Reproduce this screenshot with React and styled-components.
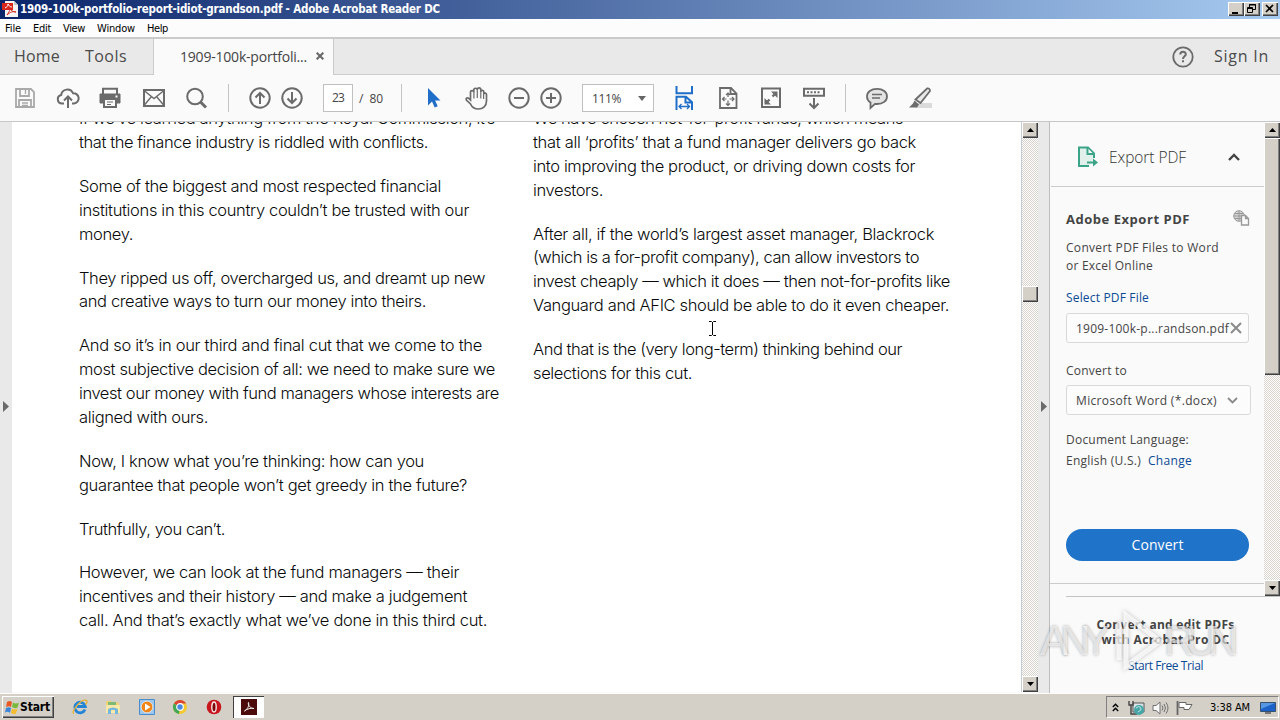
import React, { useLayoutEffect, useRef, useState } from 'react';
import styled, { createGlobalStyle, css } from 'styled-components';

const GlobalStyle = createGlobalStyle`
  * {
    box-sizing: border-box;
  }
  body {
    margin: 0;
    overflow: hidden;
    font-family: 'Open Sans', 'Noto Sans', sans-serif;
  }
  svg {
    display: block;
    flex: none;
  }
`;

const raised = css`
  background: #d4d0c8;
  box-shadow: inset 1px 1px 0 #fff, inset -1px -1px 0 #404040, inset -2px -2px 0 #808080;
`;

const Window = styled.div`
  display: flex;
  flex-direction: column;
  width: 1280px;
  height: 720px;
  background: #fafafa;
`;

const FitSpan = styled.span`
  display: inline-block;
  white-space: pre;
`;

// Spreads the letters so that the run is `width` pixels long
const Fit = ({ width, children }) => {
  const ref = useRef(null);
  const [spacing, setSpacing] = useState(0);

  useLayoutEffect(() => {
    const natural = ref.current.getBoundingClientRect().width;
    setSpacing((width - natural) / children.length);
  }, []);

  return (
    <FitSpan ref={ref} style={{ letterSpacing: `${spacing}px` }}>
      {children}
    </FitSpan>
  );
};

/* ---------- title bar ---------- */

const TitleBar = styled.header`
  display: flex;
  align-items: center;
  flex: none;
  height: 19px;
  padding: 0 2px 1px 2px;
  background: linear-gradient(90deg, #0a246a, #a6caf0);
  color: #fff;
  font: bold 11.5px/17px 'DejaVu Sans Condensed', 'DejaVu Sans', sans-serif;
`;
const TitleText = styled.div`
  flex: 1;
  margin-left: 2px;
`;
const TitleButton = styled.button`
  ${raised}
  width: 16px;
  height: 14px;
  margin-left: ${(props) => props.$gap || 0}px;
  padding: 0;
  border: 0;
`;

const MenuBar = styled.nav`
  display: flex;
  flex: none;
  height: 18px;
  padding-left: 5px;
  background: #fcfcfc;
  font: 11px/19px 'DejaVu Sans Condensed', 'DejaVu Sans', sans-serif;
  color: #000;
`;
const MenuItem = styled.div`
  width: ${(props) => props.$w}px;
`;

/* ---------- tabs ---------- */

const TabBar = styled.div`
  display: flex;
  flex: none;
  height: 38px;
  border-top: 2px solid #cbcbcb;
  background: #e9e9e9;
  color: #4b4b4b;
  font-size: 16px;
  line-height: 35px;
`;
const TabGroup = styled.div`
  display: flex;
  width: ${(props) => (props.$w ? `${props.$w}px` : 'auto')};
  flex: ${(props) => (props.$w ? 'none' : 1)};
  justify-content: ${(props) => (props.$w ? 'flex-start' : 'flex-end')};
  align-items: center;
  border-bottom: 1px solid #cbcbcb;
`;
const TabLabel = styled.div`
  margin-left: ${(props) => props.$ml}px;
`;
const FileTab = styled.div`
  display: flex;
  align-items: center;
  width: 181px;
  padding: 0 0 2px 26px;
  border-left: 1px solid #cbcbcb;
  border-right: 1px solid #cbcbcb;
  background: #fafafa;
  font-size: 14px;
  color: #444;
  svg {
    margin-left: 9px;
  }
`;
const SignIn = styled.div`
  margin: 0 11px 0 19px;
`;

/* ---------- toolbar ---------- */

const Toolbar = styled.div`
  display: flex;
  align-items: center;
  flex: none;
  height: 47px;
  border-bottom: 1px solid #c6c6c6;
  background: #fafafa;
  color: #444;
  font-size: 12px;
`;
const ToolIcon = styled.svg.attrs({ width: 24, height: 24, viewBox: '0 0 24 24' })`
  margin-left: ${(props) => props.$ml}px;
  fill: none;
  stroke: ${(props) => props.$color || '#6b6b6b'};
  stroke-width: 2;
`;
const Separator = styled.div`
  width: 1px;
  height: 28px;
  margin: 0 0 0 ${(props) => props.$ml}px;
  background: #c4c4c4;
`;
const PageBox = styled.div`
  width: 30px;
  height: 28px;
  margin-left: 19px;
  border: 1px solid #c0c0c0;
  background: #fff;
  line-height: 26px;
  text-align: center;
`;
const PageTotal = styled.div`
  width: 24px;
  margin-left: 6px;
`;
const ZoomBox = styled.div`
  display: flex;
  align-items: center;
  justify-content: space-between;
  width: 72px;
  height: 28px;
  margin-left: 19px;
  padding: 0 7px 0 9px;
  border: 1px solid #c0c0c0;
  background: #fff;
`;

/* ---------- document ---------- */

const Workspace = styled.div`
  display: flex;
  flex: none;
  height: 571px;
`;
const Gutter = styled.div`
  display: flex;
  width: ${(props) => props.$w}px;
  padding: ${(props) => props.$pad};
  background: #e9e9e9;
  border-right: ${(props) => (props.$line ? '1px solid #bdbdbd' : 0)};
`;
const Page = styled.main`
  display: flex;
  width: 1009px;
  height: 570px;
  overflow: hidden;
  background: #fff;
  position: relative;
`;
const Column = styled.div`
  width: ${(props) => props.$w}px;
  margin: -14.8px 0 0 ${(props) => props.$ml}px;
  color: #080a0a;
  font: 300 16.5px/23.8px Inter, 'Liberation Sans', sans-serif;
`;
const Paragraph = styled.p`
  margin: 0 0 20.2px;
`;
const Line = styled.span`
  display: block;
  height: 23.8px;
`;
const TextCursor = styled.svg`
  position: absolute;
  left: 696px;
  top: 199px;
`;

const Scrollbar = styled.div`
  display: flex;
  flex-direction: column;
  flex: none;
  width: ${(props) => props.$w}px;
  height: ${(props) => props.$h}px;
  background: repeating-conic-gradient(#fff 0 25%, #d8d4cd 0 50%) 0 0 / 2px 2px;
  border-left: ${(props) => (props.$line ? '1px solid #c5cdd2' : 0)};
`;
const ScrollButton = styled.div`
  ${raised}
  display: flex;
  align-items: center;
  justify-content: center;
  height: 16px;
`;
const Thumb = styled.div`
  ${raised}
  height: ${(props) => props.$h}px;
  margin-top: ${(props) => props.$top}px;
  margin-bottom: auto;
`;

/* ---------- export panel ---------- */

const Panel = styled.aside`
  width: 230px;
  background: #fafafa;
  color: #444;
  font-size: 12px;
  position: relative;
`;
const PanelTop = styled.div`
  display: flex;
  height: 474px;
`;
const PanelBody = styled.div`
  width: 214px;
  height: 462px;
  border-bottom: 1px solid #cbcbcb;
`;
const PanelHeader = styled.div`
  display: flex;
  align-items: center;
  height: 65px;
  margin-left: 1px;
  padding: 6px 24px 0 26px;
  border-bottom: 1px solid #cbcbcb;
  font-size: 15.5px;
  font-weight: 300;
  color: #333;
`;
const HeaderName = styled.div`
  flex: 1;
  margin-left: 10px;
`;
const Section = styled.div`
  padding: 0 14px 0 16px;
`;
const SectionTitle = styled.div`
  display: flex;
  justify-content: space-between;
  height: 18px;
  margin-top: 23px;
  line-height: 18px;
  font-size: 13px;
  font-weight: 700;
`;
const Text = styled.div`
  margin-top: ${(props) => props.$mt || 0}px;
  line-height: 18px;
  white-space: nowrap;
`;
const Link = styled.span`
  color: #0b4a94;
  margin-left: ${(props) => props.$ml || 0}px;
`;
const Field = styled.div`
  display: flex;
  align-items: center;
  justify-content: space-between;
  width: ${(props) => props.$w}px;
  height: 30px;
  margin-top: ${(props) => props.$mt}px;
  padding: 0 ${(props) => props.$pr}px 0 9px;
  border: 1px solid #d9d9d9;
  border-radius: 3px;
  background: #fcfcfc;
`;
const ConvertButton = styled.button`
  display: block;
  width: 183px;
  height: 32px;
  margin-top: 59px;
  padding: 0;
  border: 0;
  border-radius: 16px;
  background: #1f73c9;
  color: #fff;
  font: 14px/30px 'Open Sans', 'Noto Sans', sans-serif;
`;
const Promo = styled.div`
  margin-left: 16px;
  padding: 20px 15px 0 0;
  border-top: 1px solid #c3c3c3;
  text-align: center;
  line-height: 15px;
`;
const PromoLink = styled.div`
  margin-top: 11px;
  color: #0b4a94;
`;
const Watermark = styled.div`
  position: absolute;
  left: -10px;
  top: 488px;
  display: flex;
  align-items: center;
  color: rgba(255, 255, 255, 0.6);
  font: 42px/62px 'Liberation Sans Narrow', 'Liberation Sans', Arial, sans-serif;
  text-shadow: 0 0 3px rgba(0, 0, 0, 0.32);
  svg {
    margin: 0 0 0 9px;
    filter: drop-shadow(0 0 2px rgba(0, 0, 0, 0.3));
  }
`;

/* ---------- taskbar ---------- */

const Taskbar = styled.footer`
  display: flex;
  flex: none;
  height: 27px;
  padding: 2px 1px 0 2px;
  border-top: 1px solid #fff;
  background: #d4d0c8;
  font: 11px/20px 'DejaVu Sans Condensed', 'DejaVu Sans', sans-serif;
  color: #000;
`;
const StartButton = styled.div`
  ${raised}
  display: flex;
  align-items: center;
  width: 52px;
  height: 22px;
  padding-left: 3px;
  font-weight: bold;
  font-size: 12px;
`;
const Launcher = styled.div`
  margin: 3px 0 0 ${(props) => props.$ml}px;
`;
const RunningTask = styled.div`
  display: flex;
  align-items: center;
  justify-content: center;
  width: 31px;
  height: 22px;
  margin: 0 auto 0 11px;
  background: #fff;
  box-shadow: inset 1px 1px 0 #404040;
`;
const Tray = styled.div`
  display: flex;
  align-items: center;
  width: 173px;
  height: 22px;
  padding: 1px 1px 0 5px;
  border: 1px solid;
  border-color: #808080 #fff #fff #808080;
`;
const TrayItem = styled.div`
  margin-left: ${(props) => props.$ml}px;
`;

const Triangle = ({ d, w, h, fill = '#000' }) => (
  <svg width={w} height={h}>
    <path d={d} fill={fill} />
  </svg>
);

const UpArrow = () => <Triangle w={7} h={4} d="M0 4L3.5 0L7 4Z" />;
const DownArrow = () => <Triangle w={7} h={4} d="M0 0L3.5 4L7 0Z" />;
const SideArrow = () => <Triangle w={6} h={11} d="M0 0L6 5.5L0 11Z" fill="#6a6a6a" />;

const PdfIcon = () => (
  <svg width="16" height="16" viewBox="0 0 16 16">
    <path d="M3 0h9l4 4v12H3Z" fill="#f4f4f4" />
    <path d="M12 0v4h4Z" fill="#c9c9c9" />
    <path d="M0 2h11v7H0Z" fill="#d8261c" />
    <path d="M5 14c2-3 4-6 3-9c-1 3 2 6 6 6c-3-1-6 0-9 3Z" fill="none" stroke="#d8261c" />
    <path d="M3 7c2-1 3-2 3-4c1 2 2 3 4 3" fill="none" stroke="#fff" />
  </svg>
);

const leftText = [
  [['If we’ve learned anything from the Royal Commission, it’s', 416], ['that the finance industry is riddled with conflicts.', 349]],
  [['Some of the biggest and most respected financial', 362], ['institutions in this country couldn’t be trusted with our', 390], ['money.', 54]],
  [['They ripped us off, overcharged us, and dreamt up new', 406], ['and creative ways to turn our money into theirs.', 347]],
  [
    ['And so it’s in our third and final cut that we come to the', 403],
    ['most subjective decision of all: we need to make sure we', 416],
    ['invest our money with fund managers whose interests are', 420],
    ['aligned with ours.', 129],
  ],
  [['Now, I know what you’re thinking: how can you', 345], ['guarantee that people won’t get greedy in the future?', 388]],
  [['Truthfully, you can’t.', 146]],
  [
    ['However, we can look at the fund managers — their', 380],
    ['incentives and their history — and make a judgement', 388],
    ['call. And that’s exactly what we’ve done in this third cut.', 408],
  ],
];

const rightText = [
  [
    ['We have chosen not-for-profit funds, which means', 370],
    ['that all ‘profits’ that a fund manager delivers go back', 383],
    ['into improving the product, or driving down costs for', 382],
    ['investors.', 70],
  ],
  [
    ['After all, if the world’s largest asset manager, Blackrock', 401],
    ['(which is a for-profit company), can allow investors to', 386],
    ['invest cheaply — which it does — then not-for-profits like', 417],
    ['Vanguard and AFIC should be able to do it even cheaper.', 416],
  ],
  [['And that is the (very long-term) thinking behind our', 369], ['selections for this cut.', 159]],
];

const TextColumn = ({ paragraphs, ...rest }) => (
  <Column {...rest}>
    {paragraphs.map((lines) => (
      <Paragraph key={lines[0][0]}>
        {lines.map(([text, width]) => (
          <Line key={text}>
            <Fit width={width}>{text}</Fit>
          </Line>
        ))}
      </Paragraph>
    ))}
  </Column>
);

const ToolbarRow = () => (
  <Toolbar>
    <ToolIcon $ml={13} $color="#a9a9a9">
      <path d="M3 3h15l3 3v15H3Z M7 3v7h9V3 M6 21v-7h12v7" strokeWidth="1.8" />
      <path d="M12.5 4v4 M9 17h6 M9 19.5h6" strokeWidth="1.4" />
    </ToolIcon>
    <ToolIcon $ml={19}>
      <path d="M8 17.5H6a4.3 4.3 0 0 1-.8-8.5A6.2 6.2 0 0 1 17 7.2a5 5 0 0 1 1 10.3h-2" />
      <path d="M12 22V11 M8 14.5l4-4l4 4" />
    </ToolIcon>
    <ToolIcon $ml={18}>
      <path d="M5 8V2.8h14V8" fill="#fafafa" />
      <path d="M2 8h20v9h-3v-3H5v3H2Z" fill="#6b6b6b" strokeWidth="1" />
      <path d="M6 13h12v8H6Z" fill="#fafafa" />
      <path d="M9 16h6 M9 18.5h4" strokeWidth="1.2" />
      <path d="M17.5 10.5h2" stroke="#fff" />
    </ToolIcon>
    <ToolIcon $ml={20}>
      <path d="M2 4h20v16H2Z" />
      <path d="M2 4.5l10 8l10-8 M2 19.5l7.5-9 M22 19.5l-7.5-9" strokeWidth="1.4" />
    </ToolIcon>
    <ToolIcon $ml={19}>
      <circle cx="10" cy="10.5" r="7.8" />
      <path d="M15.5 16l5.5 5.5" strokeWidth="3" />
    </ToolIcon>
    <Separator $ml={19} />
    <ToolIcon $ml={19}>
      <circle cx="12" cy="12" r="9.7" />
      <path d="M12 18V7.5 M7.5 11.5L12 7l4.5 4.5" />
    </ToolIcon>
    <ToolIcon $ml={8}>
      <circle cx="12" cy="12" r="9.7" />
      <path d="M12 6v10.5 M7.5 12.5L12 17l4.5-4.5" />
    </ToolIcon>
    <PageBox><Fit width={12}>23</Fit></PageBox>
    <PageTotal><Fit width={24}>/  80</Fit></PageTotal>
    <Separator $ml={18} />
    <ToolIcon $ml={19} $color="none">
      <path d="M7 2v17.5l4-4l2.7 6l3-1.3l-2.6-5.6h5.4Z" fill="#1f6fc9" />
    </ToolIcon>
    <ToolIcon $ml={19}>
      <path
        d="M6.5 14V6.3a1.5 1.5 0 0 1 3.3 0V4a1.5 1.5 0 0 1 3.5 0v-.3a1.5 1.5 0 0 1 3.5 0v2a1.5 1.5 0 0 1 3 .3v2a1.4 1.4 0 0 1 2.7.5v6.5c0 5-3.5 8-8 8c-4 0-6.5-1.5-8-5L2.3 14c-.8-2 1.2-2.8 2.5-1.5Z"
        strokeWidth="1.7"
      />
      <path d="M9.9 6v6.5 M13.3 4v8 M16.8 5v7.5 M19.6 7.5v5.5" strokeWidth="1.2" />
    </ToolIcon>
    <ToolIcon $ml={19}>
      <circle cx="12" cy="12" r="9.7" />
      <path d="M7 12h10" />
    </ToolIcon>
    <ToolIcon $ml={8}>
      <circle cx="12" cy="12" r="9.7" />
      <path d="M7 12h10 M12 7v10" />
    </ToolIcon>
    <ZoomBox>
      <Fit width={29}>111%</Fit>
      <Triangle w={8} h={5} d="M0 0H8L4 5Z" fill="#666" />
    </ZoomBox>
    <ToolIcon $ml={18} $color="#1f6fc9">
      <path d="M4.5 0v7.2h15.5V0 M4.5 24V10.8h9.5l6 5.5V24 M13.5 11v5.5h6" />
      <path d="M7 20.5h10.5 M9.5 18l-2.5 2.5l2.5 2.5 M15 18l2.5 2.5l-2.5 2.5" strokeWidth="1.3" />
    </ToolIcon>
    <ToolIcon $ml={20}>
      <path d="M4 2h11l5.5 5.5V22H4Z M14.5 2v6h6" strokeWidth="1.8" />
      <path d="M12 7v4 M12 14.5v5 M6.5 13h4 M13.5 13h4.5 M10 9l2-2l2 2 M10 17.5l2 2l2-2 M8.5 11l-2 2l2 2 M16 11l2 2l-2 2" strokeWidth="1.2" />
    </ToolIcon>
    <ToolIcon $ml={19}>
      <path d="M3 2.5h18v18.5H3Z" />
      <path d="M12 5.5h6.5V12Z M5.5 12v6.5H12Z" fill="#6b6b6b" stroke="none" />
      <path d="M13.5 10.5l3-3 M7.5 16.5l3-3" strokeWidth="2.4" />
    </ToolIcon>
    <ToolIcon $ml={19}>
      <path d="M2 2.8h20v7H2Z" />
      <path d="M5 6.3h14" strokeDasharray="2 1.5" />
      <path d="M12 12v9.5 M7.5 17.5L12 22l4.5-4.5" />
    </ToolIcon>
    <Separator $ml={19} />
    <ToolIcon $ml={19}>
      <path d="M12 2.8c6 0 10 3.2 10 7.6s-4 7.6-10 7.6l-2-.1L5.5 22v-5.5C3.2 15 2 13 2 10.4c0-4.4 4-7.6 10-7.6Z" fill="#e3e3e3" strokeWidth="1.8" />
      <path d="M7 8.5h10 M7 12h8" strokeWidth="1.5" />
    </ToolIcon>
    <ToolIcon $ml={19}>
      <path d="M10 17h14v5H7Z" fill="#dadada" stroke="none" />
      <path d="M19 2.5q3-.5 3 2.5L12.5 17l-5-3.5Z" fill="#e8e8e8" strokeWidth="1.8" />
      <path d="M6.5 14.5l4.5 4l-2 3H1l4-4Z" fill="#6b6b6b" stroke="none" />
    </ToolIcon>
  </Toolbar>
);

const ExportPanel = () => (
  <Panel>
    <PanelTop>
      <PanelBody>
        <PanelHeader>
          <svg width="22" height="22" viewBox="0 0 22 22" fill="none" stroke="#3aa488" strokeWidth="2">
            <path d="M12 20H2V1.5h9l6 6V12" fill="#e2f0ec" />
            <path d="M10.5 2v6h6" fill="#fafafa" />
            <path d="M10 16.5h8" />
            <path d="M16 12.5l5 4l-5 4Z" fill="#3aa488" stroke="none" />
          </svg>
          <HeaderName><Fit width={77}>Export PDF</Fit></HeaderName>
          <svg width="12" height="8" fill="none" stroke="#444" strokeWidth="2.4">
            <path d="M1 7l5-5l5 5" />
          </svg>
        </PanelHeader>
        <Section>
          <SectionTitle>
            <Fit width={124}>Adobe Export PDF</Fit>
            <svg width="17" height="17" viewBox="0 0 17 17" fill="none" stroke="#989898">
              <circle cx="6" cy="6" r="5.3" fill="#d4d4d4" />
              <path d="M1 6h10 M6 1v10 M2 3.5h8 M2 8.5h8" />
              <path d="M8.5 5.5h4l3 3v6.5h-7Z M12.5 5.5v3h3" fill="#fafafa" strokeWidth="1.3" />
            </svg>
          </SectionTitle>
          <Text $mt={11}><Fit width={153}>Convert PDF Files to Word</Fit></Text>
          <Text><Fit width={87}>or Excel Online</Fit></Text>
          <Text $mt={14}><Link><Fit width={83}>Select PDF File</Fit></Link></Text>
          <Field $w={183} $mt={6} $pr={6}>
            <Fit width={153}>1909-100k-p...randson.pdf</Fit>
            <svg width="12" height="12" stroke="#8a8a8a" strokeWidth="2">
              <path d="M1 1l10 10 M11 1L1 11" />
            </svg>
          </Field>
          <Text $mt={19}><Fit width={61}>Convert to</Fit></Text>
          <Field $w={185} $mt={5} $pr={12}>
            <Fit width={141}>Microsoft Word (*.docx)</Fit>
            <svg width="11" height="7" fill="none" stroke="#8a8a8a" strokeWidth="1.8">
              <path d="M1 1l4.5 4.5L10 1" />
            </svg>
          </Field>
          <Text $mt={16}><Fit width={123}>Document Language:</Fit></Text>
          <Text $mt={3}>
            <Fit width={75}>English (U.S.)</Fit>
            <Link $ml={7}><Fit width={44}>Change</Fit></Link>
          </Text>
          <ConvertButton><Fit width={52}>Convert</Fit></ConvertButton>
        </Section>
      </PanelBody>
      <Scrollbar $w={16} $h={474}>
        <ScrollButton><UpArrow /></ScrollButton>
        <Thumb $h={237} $top={0} />
        <ScrollButton><DownArrow /></ScrollButton>
      </Scrollbar>
    </PanelTop>
    <Promo>
      <b><Fit width={138}>Convert and edit PDFs</Fit></b>
      <br />
      <b><Fit width={128}>with Acrobat Pro DC</Fit></b>
      <PromoLink><Fit width={75}>Start Free Trial</Fit></PromoLink>
    </Promo>
    <Watermark>
      <Fit width={62}>ANY</Fit>
      <svg width="53" height="62" fill="none" stroke="rgba(255,255,255,.75)" strokeWidth="5">
        <path d="M15 5L49 31L15 56Z M8 12v38" />
      </svg>
      <Fit width={66}>RUN</Fit>
    </Watermark>
  </Panel>
);

const TaskbarRow = () => (
  <Taskbar>
    <StartButton>
      <svg width="15" height="15" viewBox="0 0 15 15">
        <path d="M2 2q3-2 5 0L6 7Q4 5.5 1 7Z" fill="#e55a25" />
        <path d="M8 2.5q3 2 6 0L12.5 7.5Q10 9 7 7Z" fill="#78b83a" />
        <path d="M1 8q3-1.5 5 0L5 13Q3 11 0 12.5Z" fill="#3a86d8" />
        <path d="M7 8.5q3 2 5.5 0L11 13.5Q9 15 6 13Z" fill="#f4bd2c" />
      </svg>
      <Fit width={30}>Start</Fit>
    </StartButton>
    <Launcher $ml={18}>
      <svg width="16" height="16" viewBox="0 0 16 16" fill="none">
        <path d="M13 10.5A5.3 5.3 0 1 1 13.3 7.5H5" stroke="#2384d6" strokeWidth="2.8" />
        <path d="M2 14.5C-2 14 9-1 14.5 1.5q1.5 1-1 4" stroke="#e4b23c" strokeWidth="1.4" />
      </svg>
    </Launcher>
    <Launcher $ml={17}>
      <svg width="16" height="16" viewBox="0 0 16 16">
        <path d="M1 2h5l1 1.5h7V13H1Z" fill="#efd277" />
        <path d="M3 3h8v4H3Z" fill="#7dbb74" />
        <path d="M1 6h14v8H1Z" fill="#f8e9a8" />
        <path d="M3 15v-5q5-3 10 0v5h-3v-4H6v4Z" fill="#74b7dc" />
      </svg>
    </Launcher>
    <Launcher $ml={18}>
      <svg width="16" height="16" viewBox="0 0 16 16">
        <path d="M.5.5h15v15H.5Z" fill="#9cc8ef" stroke="#4c8cc8" />
        <circle cx="8" cy="8" r="5.8" fill="#f08519" stroke="#fff" strokeWidth=".6" />
        <path d="M6 4.5L11.5 8L6 11.5Z" fill="#fff" />
      </svg>
    </Launcher>
    <Launcher $ml={17}>
      <svg width="16" height="16" viewBox="0 0 16 16">
        <circle cx="8" cy="8" r="7" fill="#f5c932" />
        <path d="M8 8L1.9 4.5A7 7 0 0 1 14.1 4.5H8Z" fill="#dc4535" />
        <path d="M8 8l-1 7A7 7 0 0 1 1.9 4.5Z" fill="#45a655" />
        <circle cx="8" cy="8" r="3.3" fill="#4b88e0" stroke="#fff" strokeWidth="1.2" />
      </svg>
    </Launcher>
    <Launcher $ml={18}>
      <svg width="16" height="16" viewBox="0 0 16 16">
        <circle cx="8" cy="8" r="7.3" fill="#c8141c" />
        <ellipse cx="8" cy="8" rx="2.2" ry="5" fill="#7c0509" stroke="#f7e8e8" strokeWidth="1.4" />
      </svg>
    </Launcher>
    <RunningTask>
      <svg width="16" height="16" viewBox="0 0 16 16" fill="none">
        <path d="M0 0h16v16H0Z" fill="#4c0b0b" />
        <path d="M3.5 12c3-2 5-5 4-8.5c-1 2 1.5 6 5.5 6c-3-.7-7 .3-9.5 2.5Z" stroke="#eee" />
      </svg>
    </RunningTask>
    <Tray>
      <svg width="7" height="9" fill="none" stroke="#000" strokeWidth="1.4">
        <path d="M.8 4l2.7-2.7L6.2 4 M.8 8l2.7-2.7L6.2 8" />
      </svg>
      <TrayItem $ml={9}>
        <svg width="17" height="16" viewBox="0 0 17 16" fill="none">
          <path d="M5 3h11v9H5Z" fill="#d9e2e4" stroke="#555" />
          <path d="M1 1v4h4V1 M3 5v9h6" stroke="#444" strokeWidth="1.4" />
          <circle cx="11" cy="10" r="5" fill="#47a6a8" />
          <path d="M8 8q3-3 5 0q1 2-3 4" stroke="#bce6e1" />
        </svg>
      </TrayItem>
      <TrayItem $ml={7}>
        <svg width="17" height="16" viewBox="0 0 17 16" fill="none" stroke="#707070">
          <path d="M1 5.5h3L8 2v12l-4-3.5H1Z" fill="#f8f8f8" />
          <path d="M10 5.5q2 2.5 0 5 M12 4q3 4 0 8 M14 2.5q4 5.5 0 11" />
        </svg>
      </TrayItem>
      <TrayItem $ml={7}>
        <svg width="17" height="16" viewBox="0 0 17 16">
          <path d="M3 2.5h7v2h6l-3 5H8v-2H3Z" fill="#fff" stroke="#666" />
          <path d="M1.5 1v14" stroke="#666" strokeWidth="1.8" />
        </svg>
      </TrayItem>
      <TrayItem $ml={17}><Fit width={40}>3:38 AM</Fit></TrayItem>
      <TrayItem $ml={10}>
        <svg width="16" height="14" viewBox="0 0 16 14">
          <path d="M.5 1.5h15v9H.5Z" fill="#1c61c8" stroke="#36506e" />
          <path d="M1 2h14L1 8Z" fill="#5697e4" />
          <path d="M5 11h6v2H5Z" fill="#777" />
        </svg>
      </TrayItem>
    </Tray>
  </Taskbar>
);

const App = () => (
  <Window>
    <GlobalStyle />
    <TitleBar>
      <PdfIcon />
      <TitleText><Fit width={420}>1909-100k-portfolio-report-idiot-grandson.pdf - Adobe Acrobat Reader DC</Fit></TitleText>
      <TitleButton aria-label="Minimize">
        <svg width="16" height="14"><path d="M4 10h6v2H4Z" /></svg>
      </TitleButton>
      <TitleButton aria-label="Restore">
        <svg width="16" height="14" fill="none" stroke="#000">
          <path d="M5.5 5V2.5h6v5H9 M5 3h7 M3.5 5.5h5v5h-5Z M3 6.5h6" />
        </svg>
      </TitleButton>
      <TitleButton aria-label="Close" $gap={2}>
        <svg width="16" height="14" stroke="#000" strokeWidth="1.6">
          <path d="M4 3l7 7 M11 3l-7 7" />
        </svg>
      </TitleButton>
    </TitleBar>
    <MenuBar>
      <MenuItem $w={28}><Fit width={16}>File</Fit></MenuItem>
      <MenuItem $w={30}><Fit width={18}>Edit</Fit></MenuItem>
      <MenuItem $w={34}><Fit width={22}>View</Fit></MenuItem>
      <MenuItem $w={50}><Fit width={38}>Window</Fit></MenuItem>
      <MenuItem $w={30}><Fit width={21}>Help</Fit></MenuItem>
    </MenuBar>
    <TabBar>
      <TabGroup $w={153}>
        <TabLabel $ml={14}><Fit width={46}>Home</Fit></TabLabel>
        <TabLabel $ml={25}><Fit width={42}>Tools</Fit></TabLabel>
      </TabGroup>
      <FileTab>
        <Fit width={127}>1909-100k-portfoli...</Fit>
        <svg width="8" height="8" stroke="#666" strokeWidth="2"><path d="M.7.7l6.6 6.6 M7.3.7L.7 7.3" /></svg>
      </FileTab>
      <TabGroup>
        <ToolIcon as="svg" width="24" height="24" viewBox="0 0 24 24" $ml={0}>
          <circle cx="12" cy="12" r="9.7" strokeWidth="1.8" />
          <path d="M9.3 9.5c0-3.5 5.5-3.5 5.5-.3c0 2-2.8 2.2-2.8 4.8 M12 15.3v2" />
        </ToolIcon>
        <SignIn><Fit width={55}>Sign In</Fit></SignIn>
      </TabGroup>
    </TabBar>
    <ToolbarRow />
    <Workspace>
      <Gutter $w={12} $pad="279px 0 0 3px"><SideArrow /></Gutter>
      <Page>
        <TextColumn paragraphs={leftText} $w={430} $ml={67} />
        <TextColumn paragraphs={rightText} $w={440} $ml={24} />
        <TextCursor width="9" height="15" fill="none" stroke="#000">
          <path d="M1 .5h2.5l1 1l1-1H8 M4.5 1v13 M1 14.5h2.5l1-1l1 1H8" />
        </TextCursor>
      </Page>
      <Scrollbar $w={17} $h={570} $line>
        <ScrollButton><UpArrow /></ScrollButton>
        <Thumb $h={16} $top={148} />
        <ScrollButton><DownArrow /></ScrollButton>
      </Scrollbar>
      <Gutter $w={12} $pad="279px 0 0 3px" $line><SideArrow /></Gutter>
      <ExportPanel />
    </Workspace>
    <TaskbarRow />
  </Window>
);

export default App;
